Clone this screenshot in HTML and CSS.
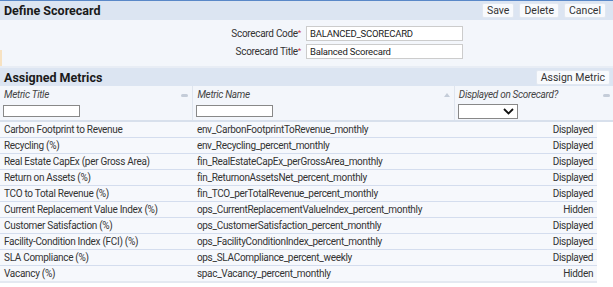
FILE: index.html
```html
<!DOCTYPE html>
<html lang="en">
<head>
    <meta charset="UTF-8">
    <title>Define Scorecard</title>
    <link rel="stylesheet" href="styles.css">
</head>
<body>
    <div class="panel-head">
        <h1>Define Scorecard</h1>
        <div class="actions">
            <button class="btn">Save</button>
            <button class="btn">Delete</button>
            <button class="btn">Cancel</button>
        </div>
    </div>
    <div class="form">
        <div class="field">
            <label>Scorecard Code<span class="req">*</span></label>
            <input type="text" value="BALANCED_SCORECARD">
        </div>
        <div class="field">
            <label>Scorecard Title<span class="req">*</span></label>
            <input type="text" value="Balanced Scorecard">
        </div>
    </div>
    <div class="panel-head sub">
        <h2>Assigned Metrics</h2>
        <div class="actions">
            <button class="btn">Assign Metric</button>
        </div>
    </div>
    <table class="grid">
        <thead>
            <tr>
                <th class="c1"><span class="lbl">Metric Title</span><span class="sort dash"></span><input type="text"></th>
                <th class="c2"><span class="lbl">Metric Name</span><span class="sort up"></span><input type="text"></th>
                <th class="c3"><span class="lbl">Displayed on Scorecard?</span>
                    <div class="select"><svg width="11" height="7" viewBox="0 0 11 7"><path d="M1 1 L5.5 5.5 L10 1" fill="none" stroke="#111" stroke-width="1.8"/></svg></div>
                </th>
                <th class="c4"><span class="sort dash"></span></th>
            </tr>
        </thead>
        <tbody id="rows"></tbody>
    </table>

    <script>
        const metrics = [
            ['Carbon Footprint to Revenue', 'env_CarbonFootprintToRevenue_monthly', 'Displayed'],
            ['Recycling (%)', 'env_Recycling_percent_monthly', 'Displayed'],
            ['Real Estate CapEx (per Gross Area)', 'fin_RealEstateCapEx_perGrossArea_monthly', 'Displayed'],
            ['Return on Assets (%)', 'fin_ReturnonAssetsNet_percent_monthly', 'Displayed'],
            ['TCO to Total Revenue (%)', 'fin_TCO_perTotalRevenue_percent_monthly', 'Displayed'],
            ['Current Replacement Value Index (%)', 'ops_CurrentReplacementValueIndex_percent_monthly', 'Hidden'],
            ['Customer Satisfaction (%)', 'ops_CustomerSatisfaction_percent_monthly', 'Displayed'],
            ['Facility-Condition Index (FCI) (%)', 'ops_FacilityConditionIndex_percent_monthly', 'Displayed'],
            ['SLA Compliance (%)', 'ops_SLACompliance_percent_weekly', 'Displayed'],
            ['Vacancy (%)', 'spac_Vacancy_percent_monthly', 'Hidden']
        ];
        const body = document.getElementById('rows');
        metrics.forEach(m => {
            const row = document.createElement('tr');
            row.innerHTML = `<td>${m[0]}</td><td>${m[1]}</td><td class="num">${m[2]}</td><td class="gap"></td>`;
            body.appendChild(row);
        });
    </script>
</body>
</html>
```

FILE: styles.css
```css
body {
    margin: 0;
    font-family: Roboto, Arial, sans-serif;
    font-size: 10px;
    letter-spacing: -0.3px;
    color: #333;
    background: #fff;
    border-top: 1px solid #5a88c8;
}
.panel-head {
    display: flex;
    align-items: center;
    justify-content: space-between;
    height: 19px;
    padding: 0 7px 0 4px;
    background: #dce5f2;
}
.panel-head h1,
.panel-head h2 {
    margin: 0;
    font-size: 12.5px;
    font-weight: bold;
    letter-spacing: 0;
    color: #1a1a1a;
}
.panel-head.sub {
    height: 18px;
    padding-right: 3px;
    border-top: 2px solid #e8edf5;
}
.actions {
    display: flex;
    gap: 5px;
}
.btn {
    font-family: inherit;
    font-size: 10.5px;
    color: #333;
    background: #f8fafd;
    border: 1px solid #e2e8f1;
    border-radius: 2px;
    padding: 0 4px;
    height: 15px;
    line-height: 13px;
}
.form {
    position: relative;
    background: #f3f6fb;
    padding: 6px 0 7px;
}
.form::before {
    content: "";
    position: absolute;
    left: 0;
    bottom: 0;
    width: 2px;
    height: 16px;
    background: #f7e2c2;
}
.field {
    display: flex;
    align-items: center;
    margin-bottom: 3px;
}
.field:last-child {
    margin-bottom: 0;
}
.field label {
    width: 301px;
    text-align: right;
    color: #333;
}
.req {
    color: #c33;
    font-size: 8px;
    vertical-align: top;
}
.field input {
    margin-left: 5px;
    width: 149px;
    height: 13px;
    padding: 0 3px;
    border: 1px solid #ccc;
    font-family: inherit;
    font-size: 9.5px;
    letter-spacing: -0.2px;
    color: #222;
}
.grid {
    width: 613px;
    border-collapse: collapse;
}
.grid th {
    position: relative;
    text-align: left;
    font-weight: normal;
    font-style: italic;
    color: #444;
    background: #f3f6fb;
    border-right: 1px solid #dfe5ee;
    padding: 3px 4px 0 4px;
    height: 31px;
    vertical-align: top;
}
.grid th.c3,
.grid th.c4 {
    border-right: none;
}
.grid th .lbl {
    display: block;
    height: 15px;
    white-space: nowrap;
}
.grid th input {
    display: block;
    width: 73px;
    height: 10px;
    border: 1px solid #888;
    padding: 0 1px;
    margin: 1px 0 0 -1px;
}
.c1 { width: 185px; }
.c2 { width: 253px; }
.c3 { width: 135px; }
.c4 { width: 8px; }
.select {
    width: 55px;
    height: 13px;
    border: 1px solid #888;
    background: #fff;
    margin: 0 0 0 -1px;
    display: flex;
    justify-content: flex-end;
    align-items: center;
    padding-right: 3px;
}
.sort {
    position: absolute;
    right: 4px;
    top: 8px;
}
.c4 .sort {
    right: 3px;
}
.sort.dash {
    width: 7px;
    height: 3px;
    background: #c4ccd8;
    border-radius: 1.5px;
}
.sort.up {
    top: 7px;
    width: 0;
    height: 0;
    border-left: 3px solid transparent;
    border-right: 3px solid transparent;
    border-bottom: 4px solid #c4ccd8;
}
.grid td {
    padding: 0 4px;
    height: 15px;
    background: #f6f8fc;
    border-top: 1px solid #d4ddee;
    white-space: nowrap;
}
.grid td.gap {
    background: #fff;
    border: none;
    padding: 0;
}
.grid tbody tr:first-child td {
    border-top: 2px solid #d8e0ec;
}
.grid tbody tr:last-child td {
    border-bottom: 2px solid #e4e9f1;
}
.grid tbody tr:last-child td.gap {
    border-bottom: none;
}
.grid td.num {
    text-align: right;
}
```
